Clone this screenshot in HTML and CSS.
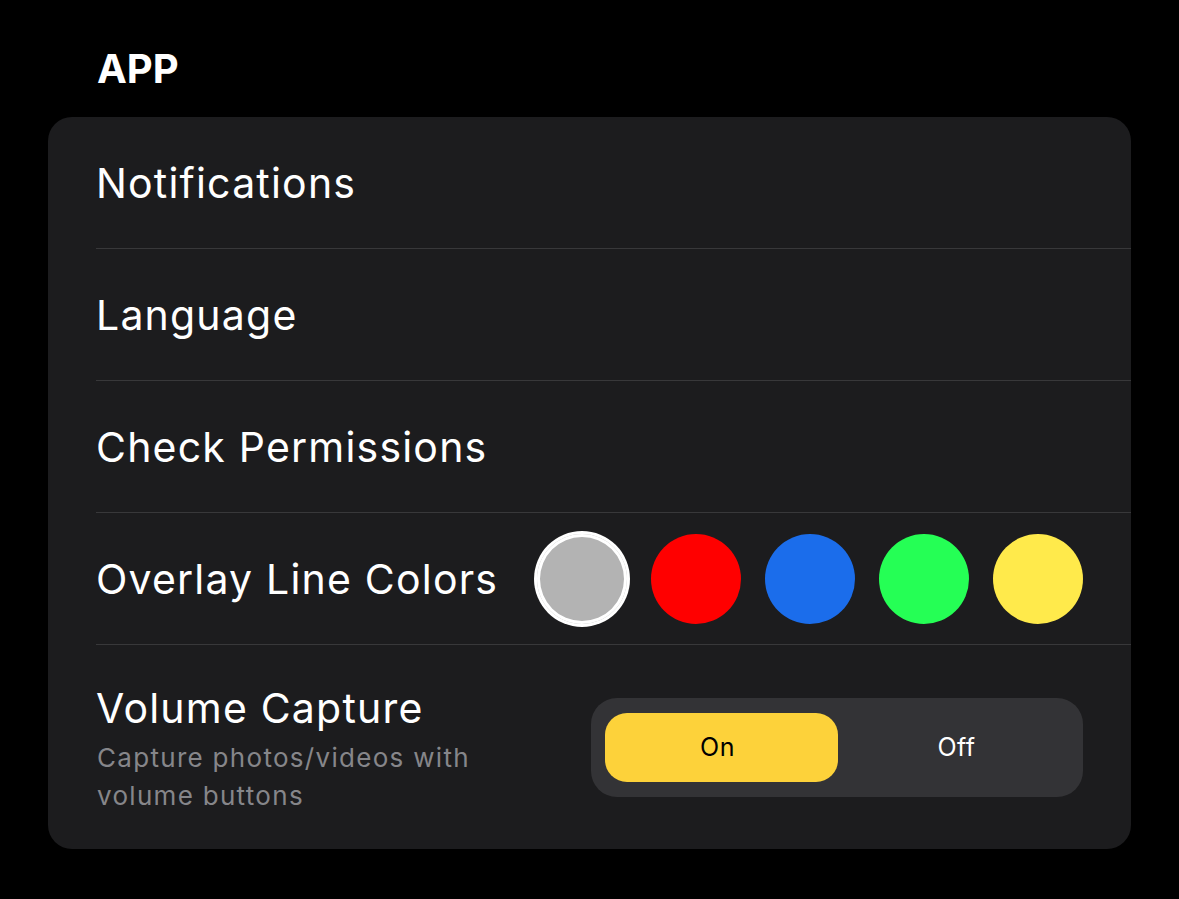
FILE: index.html
```html
<!DOCTYPE html>
<html lang="en">
<head>
    <meta charset="UTF-8">
    <meta name="viewport" content="width=device-width, initial-scale=1.0">
    <title>Settings</title>
    <link rel="stylesheet" href="styles.css">
</head>
<body>
    <main class="settings">
        <h2 class="section-title">APP</h2>

        <div class="card">
            <div class="row">
                <span class="label">Notifications</span>
            </div>
            <div class="row">
                <span class="label">Language</span>
            </div>
            <div class="row">
                <span class="label">Check Permissions</span>
            </div>
            <div class="row">
                <span class="label">Overlay Line Colors</span>
                <div class="swatches">
                    <span class="swatch gray selected"></span>
                    <span class="swatch red"></span>
                    <span class="swatch blue"></span>
                    <span class="swatch green"></span>
                    <span class="swatch yellow"></span>
                </div>
            </div>
            <div class="row tall">
                <div class="text">
                    <span class="label">Volume Capture</span>
                    <p class="hint">Capture photos/videos with volume buttons</p>
                </div>
                <div class="segmented">
                    <button class="segment active">On</button>
                    <button class="segment">Off</button>
                </div>
            </div>
        </div>
    </main>
</body>
</html>
```

FILE: styles.css
```css
body {
    margin: 0;
    background: #000;
    color: #fff;
    font-family: Inter, "Noto Sans", sans-serif;
}

.settings {
    padding: 45px 48px 0;
}

.section-title {
    margin: 0 0 24px 49px;
    font-size: 40px;
    line-height: 48px;
    font-weight: 700;
}

.card {
    background: #1c1c1e;
    border-radius: 24px;
    padding-left: 48px;
    overflow: hidden;
}

.row {
    display: flex;
    align-items: center;
    justify-content: space-between;
    height: 131px;
    padding-right: 48px;
    border-bottom: 1px solid #38383a;
}

.row.tall {
    height: 204px;
    border-bottom: none;
}

.label {
    display: block;
    font-size: 41px;
    font-weight: 400;
    letter-spacing: 1.2px;
}

.swatches {
    display: flex;
    gap: 24px;
}

.swatch {
    width: 90px;
    height: 90px;
    border-radius: 50%;
}

.swatch.selected {
    box-shadow: 0 0 0 3px #fff, inset 0 0 0 3px #fff;
}

.gray { background: #b3b3b3; }
.red { background: #ff0000; }
.blue { background: #1b6deb; }
.green { background: #25ff55; }
.yellow { background: #ffea4b; }

.text {
    padding-top: 4px;
}

.hint {
    max-width: 420px;
    margin: 6px 0 0 1px;
    font-size: 26px;
    line-height: 38px;
    letter-spacing: 1.3px;
    color: #86868a;
}

.segmented {
    display: flex;
    width: 492px;
    padding: 15px 14px;
    box-sizing: border-box;
    background: #333336;
    border-radius: 26px;
}

.segment {
    flex: 1;
    height: 69px;
    border: none;
    border-radius: 22px;
    background: transparent;
    color: #fff;
    font-family: inherit;
    font-size: 25px;
    letter-spacing: 0.5px;
}

.segment.active {
    padding-right: 14px;
    background: #fdd23a;
    color: #000;
}

.segment + .segment {
    padding-left: 12px;
}
```
